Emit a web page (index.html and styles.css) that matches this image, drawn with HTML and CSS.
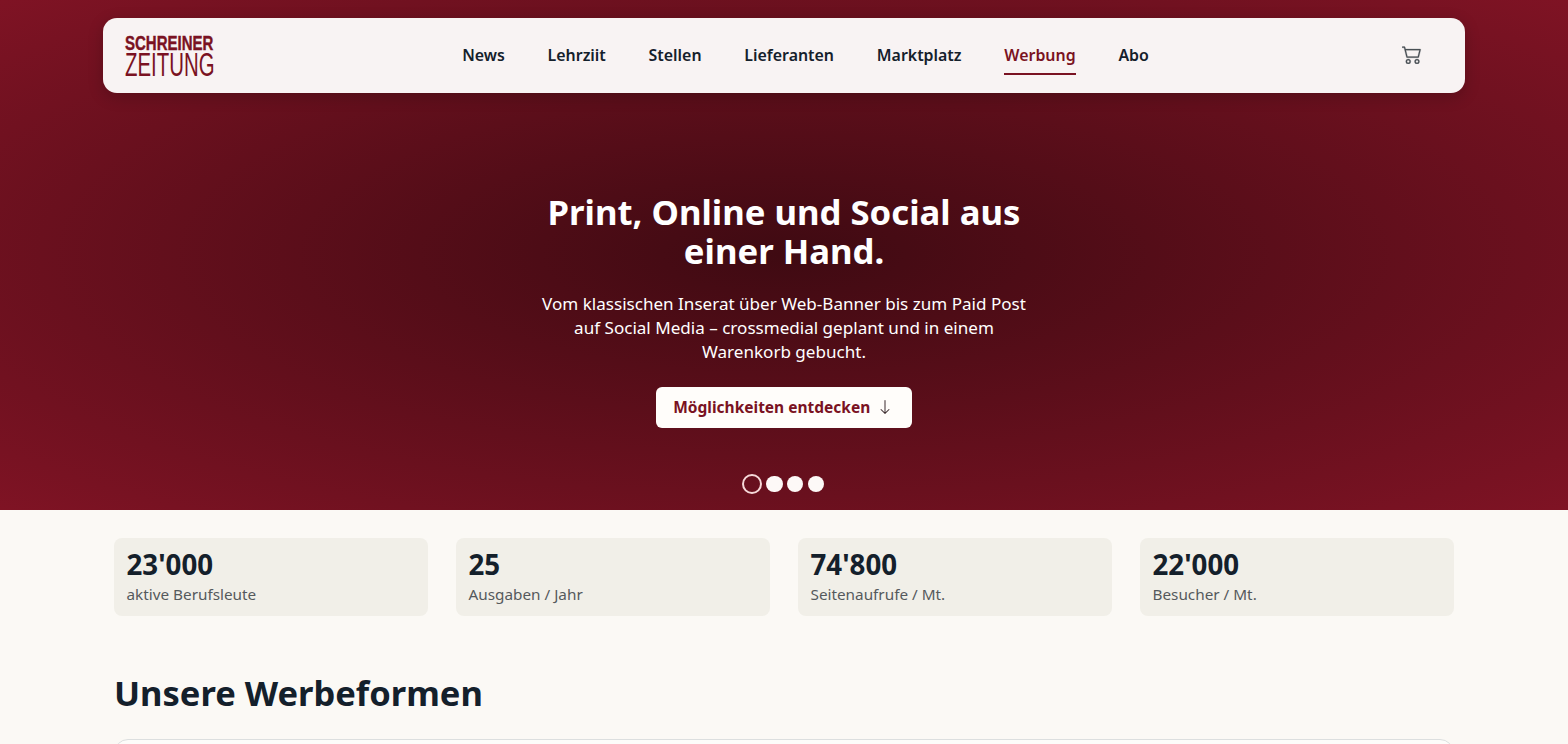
FILE: index.html
```html
<!DOCTYPE html>
<html lang="de">
<head>
    <meta charset="UTF-8">
    <title>Werbung - Schreiner Zeitung</title>
    <link rel="stylesheet" href="styles.css">
</head>

<body>
    <section class="hero">
        <header class="topbar">
            <a class="logo" href="#">
                <span class="logo_top">SCHREINER</span>
                <span class="logo_bottom">ZEITUNG</span>
            </a>
            <nav class="nav">
                <a href="#">News</a>
                <a href="#">Lehrziit</a>
                <a href="#">Stellen</a>
                <a href="#">Lieferanten</a>
                <a href="#">Marktplatz</a>
                <a href="#" class="active">Werbung</a>
                <a href="#">Abo</a>
            </nav>
            <a class="cart" href="#">
                <svg width="20" height="20" viewBox="0 0 16 16" fill="#4a4f55" stroke="#4a4f55" stroke-width="0.2">
                    <path d="M0 2.5A.5.5 0 0 1 .5 2H2a.5.5 0 0 1 .485.379L2.89 4H14.5a.5.5 0 0 1 .485.621l-1.5 6A.5.5 0 0 1 13 11H4a.5.5 0 0 1-.485-.379L1.61 3H.5a.5.5 0 0 1-.5-.5zM3.14 5l1.25 5h8.22l1.25-5H3.14zM5 13a1 1 0 1 0 0 2 1 1 0 0 0 0-2zm-2 1a2 2 0 1 1 4 0 2 2 0 0 1-4 0zm9-1a1 1 0 1 0 0 2 1 1 0 0 0 0-2zm-2 1a2 2 0 1 1 4 0 2 2 0 0 1-4 0z"/>
                </svg>
            </a>
        </header>

        <div class="hero_text">
            <h1>Print, Online und Social aus einer Hand.</h1>
            <p>Vom klassischen Inserat über Web-Banner bis zum Paid Post auf Social Media – crossmedial geplant und in einem Warenkorb gebucht.</p>
            <a class="btn" href="#">Möglichkeiten entdecken
                <svg width="16" height="16" viewBox="0 0 16 16" fill="#3a2a2c">
                    <path fill-rule="evenodd" d="M8 1a.5.5 0 0 1 .5.5v11.793l3.146-3.147a.5.5 0 0 1 .708.708l-4 4a.5.5 0 0 1-.708 0l-4-4a.5.5 0 0 1 .708-.708L7.5 13.293V1.5A.5.5 0 0 1 8 1z"/>
                </svg>
            </a>
        </div>

        <ul class="dots">
            <li class="active"></li>
            <li></li>
            <li></li>
            <li></li>
        </ul>
    </section>

    <main class="content">
        <div class="stats">
            <div class="stat"><strong>23'000</strong><span>aktive Berufsleute</span></div>
            <div class="stat"><strong>25</strong><span>Ausgaben / Jahr</span></div>
            <div class="stat"><strong>74'800</strong><span>Seitenaufrufe / Mt.</span></div>
            <div class="stat"><strong>22'000</strong><span>Besucher / Mt.</span></div>
        </div>
        <h2>Unsere Werbeformen</h2>
        <div class="panel"></div>
    </main>
</body>
</html>
```

FILE: styles.css
```css
*
{
    box-sizing: border-box;
}
html, body
{
    height: 100%;
    overflow: hidden;
}
body
{
    margin: 0;
    background: #fbf9f5;
    color: #14202b;
    font-family: "Noto Sans", "DejaVu Sans", sans-serif;
}
a
{
    text-decoration: none;
    color: inherit;
}
.hero
{
    height: 510px;
    padding-top: 18px;
    background: radial-gradient(ellipse at center, #3f0a12 0%, #7f1324 100%);
    display: flex;
    flex-direction: column;
    align-items: center;
}
.topbar
{
    width: 1362px;
    height: 75px;
    padding: 0 43px 0 22px;
    display: flex;
    align-items: center;
    justify-content: space-between;
    background: #f8f3f3;
    border-radius: 14px;
    box-shadow: 0 4px 16px rgba(0,0,0,0.2);
}
.logo
{
    width: 84px;
    display: flex;
    flex-direction: column;
    color: #7a1222;
    font-family: "Liberation Sans", sans-serif;
    white-space: nowrap;
}
.logo_top
{
    font-size: 20px;
    line-height: 16px;
    font-weight: bold;
    -webkit-text-stroke: 0.4px #7a1222;
    transform: scaleX(0.75);
    transform-origin: left;
}
.logo_bottom
{
    font-size: 34px;
    line-height: 26px;
    transform: scaleX(0.6);
    transform-origin: left;
}
.nav
{
    display: flex;
    gap: 42.8px;
    font-size: 15.92px;
    font-weight: 600;
    color: #14202b;
}
.nav a
{
    padding: 8px 0 7px;
    border-bottom: 2px solid transparent;
}
.nav .active
{
    color: #7a1222;
    border-bottom-color: #7a1222;
}
.cart
{
    display: block;
    height: 20px;
    margin-bottom: 4px;
}
.hero_text
{
    width: 500px;
    margin-top: 99px;
    text-align: center;
    color: #fff;
}
.hero_text h1
{
    margin: 0 0 22px;
    font-size: 34.7px;
    line-height: 39px;
    font-weight: 700;
}
.hero_text p
{
    margin: 0 0 23px;
    font-size: 17.07px;
    line-height: 24px;
}
.btn
{
    display: inline-flex;
    align-items: center;
    gap: 7px;
    height: 41px;
    padding: 0 19px 2px 17.5px;
    background: #fffdfa;
    color: #7a1222;
    border-radius: 6px;
    font-size: 15.5px;
    font-weight: 700;
}
.dots
{
    list-style: none;
    margin: 46px 2px 0 0;
    padding: 0;
    display: flex;
    gap: 4.3px;
    align-items: center;
}
.dots li
{
    width: 16.5px;
    height: 16.5px;
    border-radius: 50%;
    background: #fdf9f7;
}
.dots .active
{
    width: 20px;
    height: 20px;
    background: transparent;
    border: 2px solid #f6d9d9;
}
.content
{
    width: 1340px;
    margin: 0 auto;
    padding-top: 28px;
}
.stats
{
    display: grid;
    grid-template-columns: repeat(4, 314px);
    justify-content: space-between;
}
.stat
{
    height: 78px;
    padding: 6.5px 12.5px;
    background: #f1efe8;
    border-radius: 8px;
    display: flex;
    flex-direction: column;
}
.stat strong
{
    font-size: 27.7px;
    line-height: 38px;
}
.stat span
{
    margin-top: 1px;
    font-size: 15.3px;
    line-height: 20px;
    color: #55595c;
}
.content h2
{
    margin: 54px 0 23px 0;
    font-size: 34.5px;
    line-height: 46px;
    font-weight: 700;
}
.panel
{
    height: 40px;
    background: #fdfcfa;
    border: 1.5px solid #dcdfdf;
    border-radius: 14px;
}
```
